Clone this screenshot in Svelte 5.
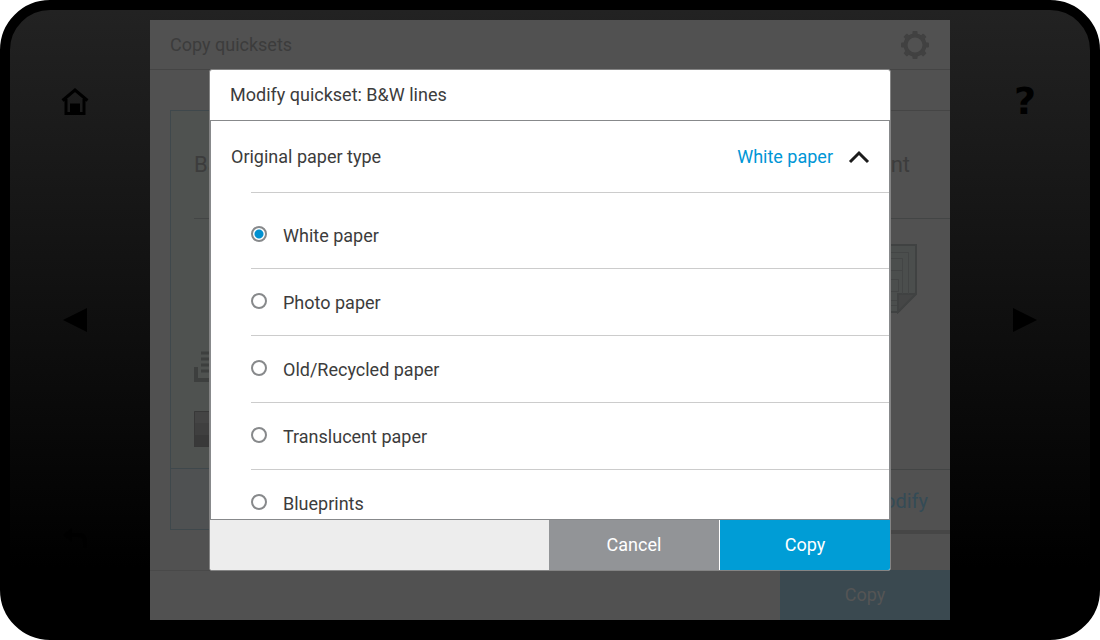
<script>
  const papers = ['White paper', 'Photo paper', 'Old/Recycled paper', 'Translucent paper', 'Blueprints'];
  let selected = $state('White paper');
  const teeth = [0, 45, 90, 135, 180, 225, 270, 315];
</script>

<div class="device">
  <nav class="side">
    <button aria-label="Home">
      <svg width="28" height="28" viewBox="0 0 28 28"><path d="M5 12v14.500h18V12M1.500 13.500 14 3l12.500 10.500" fill="none" stroke="#000" stroke-width="3"/><path d="M9 16.500h10V27H9z"/></svg>
    </button>
    <button aria-label="Previous">
      <svg width="24" height="24" viewBox="0 0 24 24"><path d="M0 12 24 0v24z"/></svg>
    </button>
    <button aria-label="Back">
      <svg width="26" height="24" viewBox="0 0 26 24"><path d="M1 8 10 1v5h7q8 0 8 9v6h-4v-6q0-5-5-5h-6v5z"/></svg>
    </button>
  </nav>

  <main class="screen">
    <header class="topbar">
      <h1>Copy quicksets</h1>
      <svg width="30" height="30" viewBox="-15 -15 30 30">
        <circle r="9.500" fill="none" stroke="#414141" stroke-width="4"/>
        {#each teeth as angle}
          <rect x="-2.500" y="-14" width="5" height="5" rx="1" fill="#414141" transform="rotate({angle})"/>
        {/each}
      </svg>
    </header>

    <section class="cards">
      <article class="card active">
        <h2>Ba</h2>
        <div class="art left">
          <svg width="36" height="32" viewBox="0 0 36 32"><path d="M2 16v13h32V16" fill="none" stroke="#3d3f3e" stroke-width="4"/><path d="M7 2h22M7 8h22M7 14h22M7 20h22" fill="none" stroke="#3d3f3e" stroke-width="3"/></svg>
          <svg width="36" height="36" viewBox="0 0 36 36"><path fill="#444" d="M0 0h36v36H0z"/><path fill="#3f3f3f" d="M0 12h36v12H0z"/><path fill="#393939" d="M0 24h36v12H0z"/><path fill="none" stroke="#383838" d="M.5.5h35v35H.5z"/></svg>
        </div>
        <footer></footer>
      </article>
      <article class="card">
        <h2>Print</h2>
        <div class="art right">
          <svg width="56" height="70" viewBox="0 0 56 70"><path d="M1 1h54v48L37 68H1z" fill="#4b4e4d" stroke="#404242" stroke-width="2"/><path d="M37 68V50h18z" fill="#454646" stroke="#404242" stroke-width="2"/><path d="M8 8.500h39.500V50M8 14.500h33.500V50M8 26.500h33M8 35.500h29.500v12H8M8 56.500h28M8 61.500h28" fill="none" stroke="#434545"/></svg>
        </div>
        <footer><a href="#modify">Modify</a></footer>
      </article>
    </section>

    <div class="bottombar"><button>Copy</button></div>

    <div class="dialog" role="dialog" aria-labelledby="dialog-title">
      <header><h2 id="dialog-title">Modify quickset: B&amp;W lines</h2></header>
      <div class="body">
        <button class="setting" aria-expanded="true">
          <span>Original paper type</span>
          <span class="value">{selected}</span>
          <svg width="22" height="14" viewBox="0 0 22 14"><path d="m2 12 9-9 9 9" fill="none" stroke="#1c1c1c" stroke-width="3"/></svg>
        </button>
        <div class="options" role="radiogroup" aria-label="Original paper type">
          {#each papers as paper}
            <label><input type="radio" name="paper" value={paper} bind:group={selected} /><span>{paper}</span></label>
          {/each}
        </div>
      </div>
      <div class="actions">
        <button class="cancel">Cancel</button>
        <button class="copy">Copy</button>
      </div>
    </div>
  </main>

  <nav class="side">
    <button class="help" aria-label="Help">?</button>
    <button aria-label="Next">
      <svg width="24" height="24" viewBox="0 0 24 24"><path d="M24 12 0 0v24z"/></svg>
    </button>
  </nav>
</div>

<style>
  :global(body) { margin: 0; background: #fff; }
  * { box-sizing: border-box; }
  h1, h2 { margin: 0; font-weight: 400; }
  button { border: 0; padding: 0; background: none; font: inherit; color: inherit; }
  svg { display: block; flex: none; }
  .device {
    display: grid;
    grid-template-columns: 130px minmax(0, 1fr) 130px;
    column-gap: 10px;
    height: 100vh;
    padding: 10px 0;
    border: 10px solid #000;
    border-radius: 50px;
    background: linear-gradient(#222, #000 90%);
    font: 18px/24px Roboto, "Liberation Sans", sans-serif;
    color: #3c3c3c;
  }
  .side {
    display: grid;
    grid-template-rows: 162px 1fr 162px;
    place-items: center;
  }
  .side button { display: grid; place-items: center; color: #000; }
  .help { font: bold 38px/40px "DejaVu Sans", sans-serif; }
  .screen {
    position: relative;
    display: flex;
    flex-direction: column;
    overflow: hidden;
    background: #515151;
  }
  .topbar {
    display: flex;
    align-items: center;
    justify-content: space-between;
    height: 50px;
    padding: 0 20px;
    border-bottom: 1px solid #454545;
    color: #3c3c3c;
  }
  h1 { font-size: 18px; }
  .cards {
    display: flex;
    flex: 1;
    min-height: 0;
    gap: 20px;
    padding: 40px 0 40px 20px;
  }
  .card {
    display: flex;
    flex: 1;
    flex-direction: column;
    border-top: 1px solid #454545;
    box-shadow: 0 4px #464646;
  }
  .card.active {
    border: 1px solid #3f484c;
    background: #4f5250;
    box-shadow: none;
  }
  .card h2 {
    height: 108px;
    margin-left: 23px;
    border-bottom: 1px solid #434545;
    font-size: 22px;
    line-height: 108px;
  }
  .card:last-child h2 { margin-left: 0; padding-right: 40px; text-align: right; }
  .art { display: flex; flex: 1; flex-direction: column; }
  .left { justify-content: flex-end; gap: 28px; padding: 0 23px 21px; }
  .right { align-items: flex-end; padding: 25px 33px; }
  .card footer {
    height: 61px;
    padding-right: 22px;
    border-top: 1px solid #434545;
    line-height: 62px;
    text-align: right;
  }
  .active footer { border-color: #3f484c; background: #4f5152; }
  .card a { color: #344b56; font-size: 20px; text-decoration: none; }
  .bottombar {
    display: flex;
    justify-content: flex-end;
    height: 50px;
    box-shadow: inset 0 1px #494949;
  }
  .bottombar button { width: 170px; background: #3a4950; color: #555; }
  .dialog {
    position: absolute;
    inset: 49px 59px;
    display: flex;
    flex-direction: column;
    border: 1px solid #848484;
    border-radius: 3px;
    background: #fff;
    overflow: hidden;
  }
  .dialog header { padding: 13px 20px; }
  .dialog h2 { font-size: 18px; }
  .body {
    flex: 1;
    min-height: 0;
    overflow: hidden;
    border: 1px solid #87898b;
  }
  .setting {
    display: flex;
    align-items: center;
    width: 100%;
    height: 71px;
    padding: 0 19px 0 20px;
    text-align: left;
  }
  .value { margin-left: auto; margin-right: 15px; color: #0096d6; }
  .options {
    margin-left: 40px;
    padding-top: 9px;
    border-top: 1px solid #ccc;
  }
  label {
    display: flex;
    align-items: center;
    gap: 16px;
    height: 67px;
    padding-bottom: 2px;
    border-bottom: 1px solid #ccc;
  }
  label span { padding-top: 4px; }
  input {
    appearance: none;
    flex: none;
    width: 16px;
    height: 16px;
    margin: 0;
    border: 2px solid #87898b;
    border-radius: 50%;
  }
  input:checked { background: radial-gradient(circle, #0090d0 4px, #fff 5px); }
  .actions {
    display: flex;
    justify-content: flex-end;
    height: 50px;
    background: #ededed;
    color: #fff;
  }
  .actions button { flex: 0 0 25%; }
  .actions .copy {
    flex-basis: calc(25% + 1px);
    border-left: 1px solid #fff;
    background: #009dd6;
  }
  .cancel { background: #929497; }
</style>
